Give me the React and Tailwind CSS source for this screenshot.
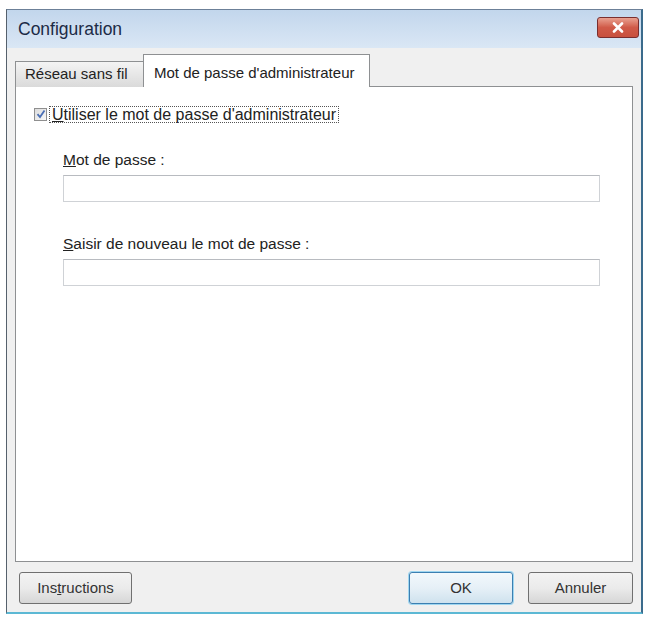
export default function App() {
  return (
    <div
      className="w-[651px] h-[617px] bg-white pt-[9px] pl-[6px] pr-[8px] pb-[3px] flex"
      style={{ fontFamily: '"Liberation Sans", Arial, sans-serif' }}
    >
      {/* Window */}
      <div className="flex-1 flex flex-col border-l border-l-[#55606c] border-t border-t-[#6c8098] border-r-2 border-r-[#3b6b8c] border-b-2 border-b-[#5cb8d4] bg-[#f0f0f0]">
        {/* Title bar */}
        <div className="h-[39px] flex items-start justify-between bg-gradient-to-b from-[#c2d6ec] to-[#dae7f5] pl-[11px] pr-[2px]">
          <span className="mt-[9px] text-[17.5px] text-[#1c2b46] leading-[20px]">Configuration</span>
          <div className="mt-[7px] w-[42px] h-[21px] rounded-[3px] border border-[#7a2e2e] bg-gradient-to-b from-[#e8a090] via-[#d05a48] to-[#c8503e] flex items-center justify-center">
            <svg width="12" height="11" viewBox="0 0 12 11">
              <path d="M2 1.5 L10 9.5 M10 1.5 L2 9.5" stroke="#fff" strokeWidth="2.6" strokeLinecap="round" />
            </svg>
          </div>
        </div>

        {/* Client area */}
        <div className="flex-1 flex flex-col pl-[8px] pr-[8px] pt-[5px] pb-[8px]">
          {/* Tabs */}
          <div className="flex items-end h-[33px] relative z-10">
            <div className="h-[26px] w-[129px] flex items-center pl-[9px] border border-[#8e9092] border-b-0 bg-gradient-to-b from-[#f4f4f4] to-[#dadada] text-[15px] text-[#222] -mb-px">
              Réseau sans fil
            </div>
            <div className="h-[33px] w-[227px] flex items-start pt-[7px] pl-[10px] border border-[#8e9092] border-b-0 -ml-px bg-white text-[15px] text-[#222] -mb-px">
              Mot de passe d'administrateur
            </div>
          </div>

          {/* Panel */}
          <div className="h-[476px] border border-[#8e9092] bg-white flex flex-col pt-[19px] pl-[18px] pr-[32px]">
            <div className="flex items-center h-[16px]">
              <div className="w-[13px] h-[13px] border border-[#8f8f8f] bg-gradient-to-br from-[#dcdcdc] to-[#f8f8f8] flex items-center justify-center">
                <svg width="10" height="10" viewBox="0 0 10 10">
                  <path d="M1.5 5.2 L4 8 L8.5 1.5" stroke="#4a6fb5" strokeWidth="1.8" fill="none" />
                </svg>
              </div>
              <span className="ml-[2px] px-[2px] border border-dotted border-[#555] text-[16px] text-[#222] leading-[15px]">
                <span className="underline">U</span>tiliser le mot de passe d'administrateur
              </span>
            </div>

            <div className="pl-[29px] flex flex-col">
              <div className="mt-[29px] text-[15.5px] text-[#222] leading-[18px]">
                <span className="underline">M</span>ot de passe :
              </div>
              <div className="mt-[6px] h-[27px] border border-[#cfd2d6] border-t-[#b8bbc0] bg-white" />

              <div className="mt-[33px] text-[15.5px] text-[#222] leading-[18px]">
                <span className="underline">S</span>aisir de nouveau le mot de passe :
              </div>
              <div className="mt-[6px] h-[27px] border border-[#cfd2d6] border-t-[#b8bbc0] bg-white" />
            </div>
          </div>

          {/* Buttons */}
          <div className="flex items-center mt-[10px] pl-[4px]">
            <button className="w-[113px] h-[32px] rounded-[3px] border border-[#707070] bg-gradient-to-b from-[#f3f3f3] via-[#ebebeb] to-[#d6d6d6] text-[15px] text-[#333]">
              Ins<span className="underline">t</span>ructions
            </button>
            <div className="flex-1" />
            <button className="w-[104px] h-[32px] rounded-[3px] border border-[#3c7fb1] shadow-[0_0_0_1px_#9fd6f0] bg-gradient-to-b from-[#f2f8fc] via-[#e6f0f7] to-[#cfe2ee] text-[15px] text-[#333]">
              OK
            </button>
            <button className="ml-[15px] w-[105px] h-[32px] rounded-[3px] border border-[#707070] bg-gradient-to-b from-[#f3f3f3] via-[#ebebeb] to-[#d6d6d6] text-[15px] text-[#333]">
              Annuler
            </button>
          </div>
        </div>
      </div>
    </div>
  );
}
